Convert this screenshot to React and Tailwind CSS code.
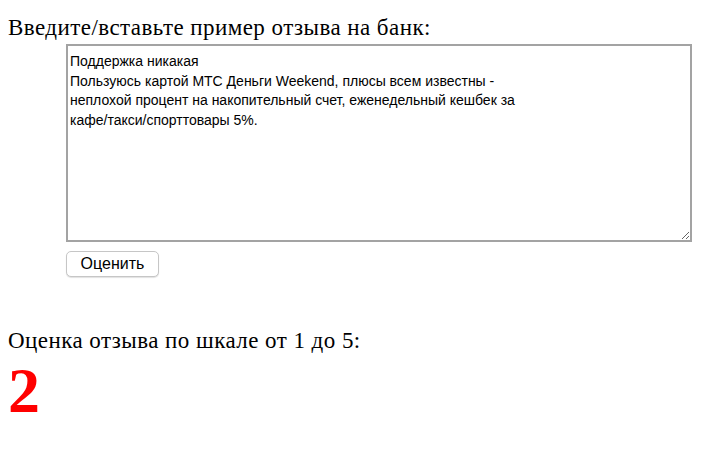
export default function App() {
  return (
    <div className="bg-white w-[719px] h-[454px] overflow-hidden px-2 pt-[15px] font-['Liberation_Serif',serif] text-black">
      <div className="text-[23px] leading-[26px] tracking-[0.45px]">
        Введите/вставьте пример отзыва на банк:
      </div>
      <div className="ml-[58px] mt-[3px] flex flex-col items-start font-['Liberation_Sans',Arial,sans-serif]">
        <textarea
          className="block w-[626px] h-[198px] border-2 border-[#a3a3a3] pl-[2px] pr-[3px] pt-[6px] text-[14px] leading-[19.5px] text-black resize-y outline-none"
          defaultValue={"Поддержка никакая\nПользуюсь картой МТС Деньги Weekend, плюсы всем известны -\nнеплохой процент на накопительный счет, еженедельный кешбек за\nкафе/такси/спорттовары 5%."}
        />
        <button className="mt-[9px] h-[26px] w-[93px] rounded-[5px] border border-[#c6c6c6] bg-white text-[16px] leading-none text-black shadow-[0_1px_1px_rgba(0,0,0,0.12)]">
          Оценить
        </button>
      </div>
      <div className="mt-[51px] text-[23px] leading-[26px] tracking-[0.45px]">
        Оценка отзыва по шкале от 1 до 5:
      </div>
      <div className="mt-[5px] text-[64px] leading-[64px] font-bold text-[#ff0000]">
        2
      </div>
    </div>
  );
}
